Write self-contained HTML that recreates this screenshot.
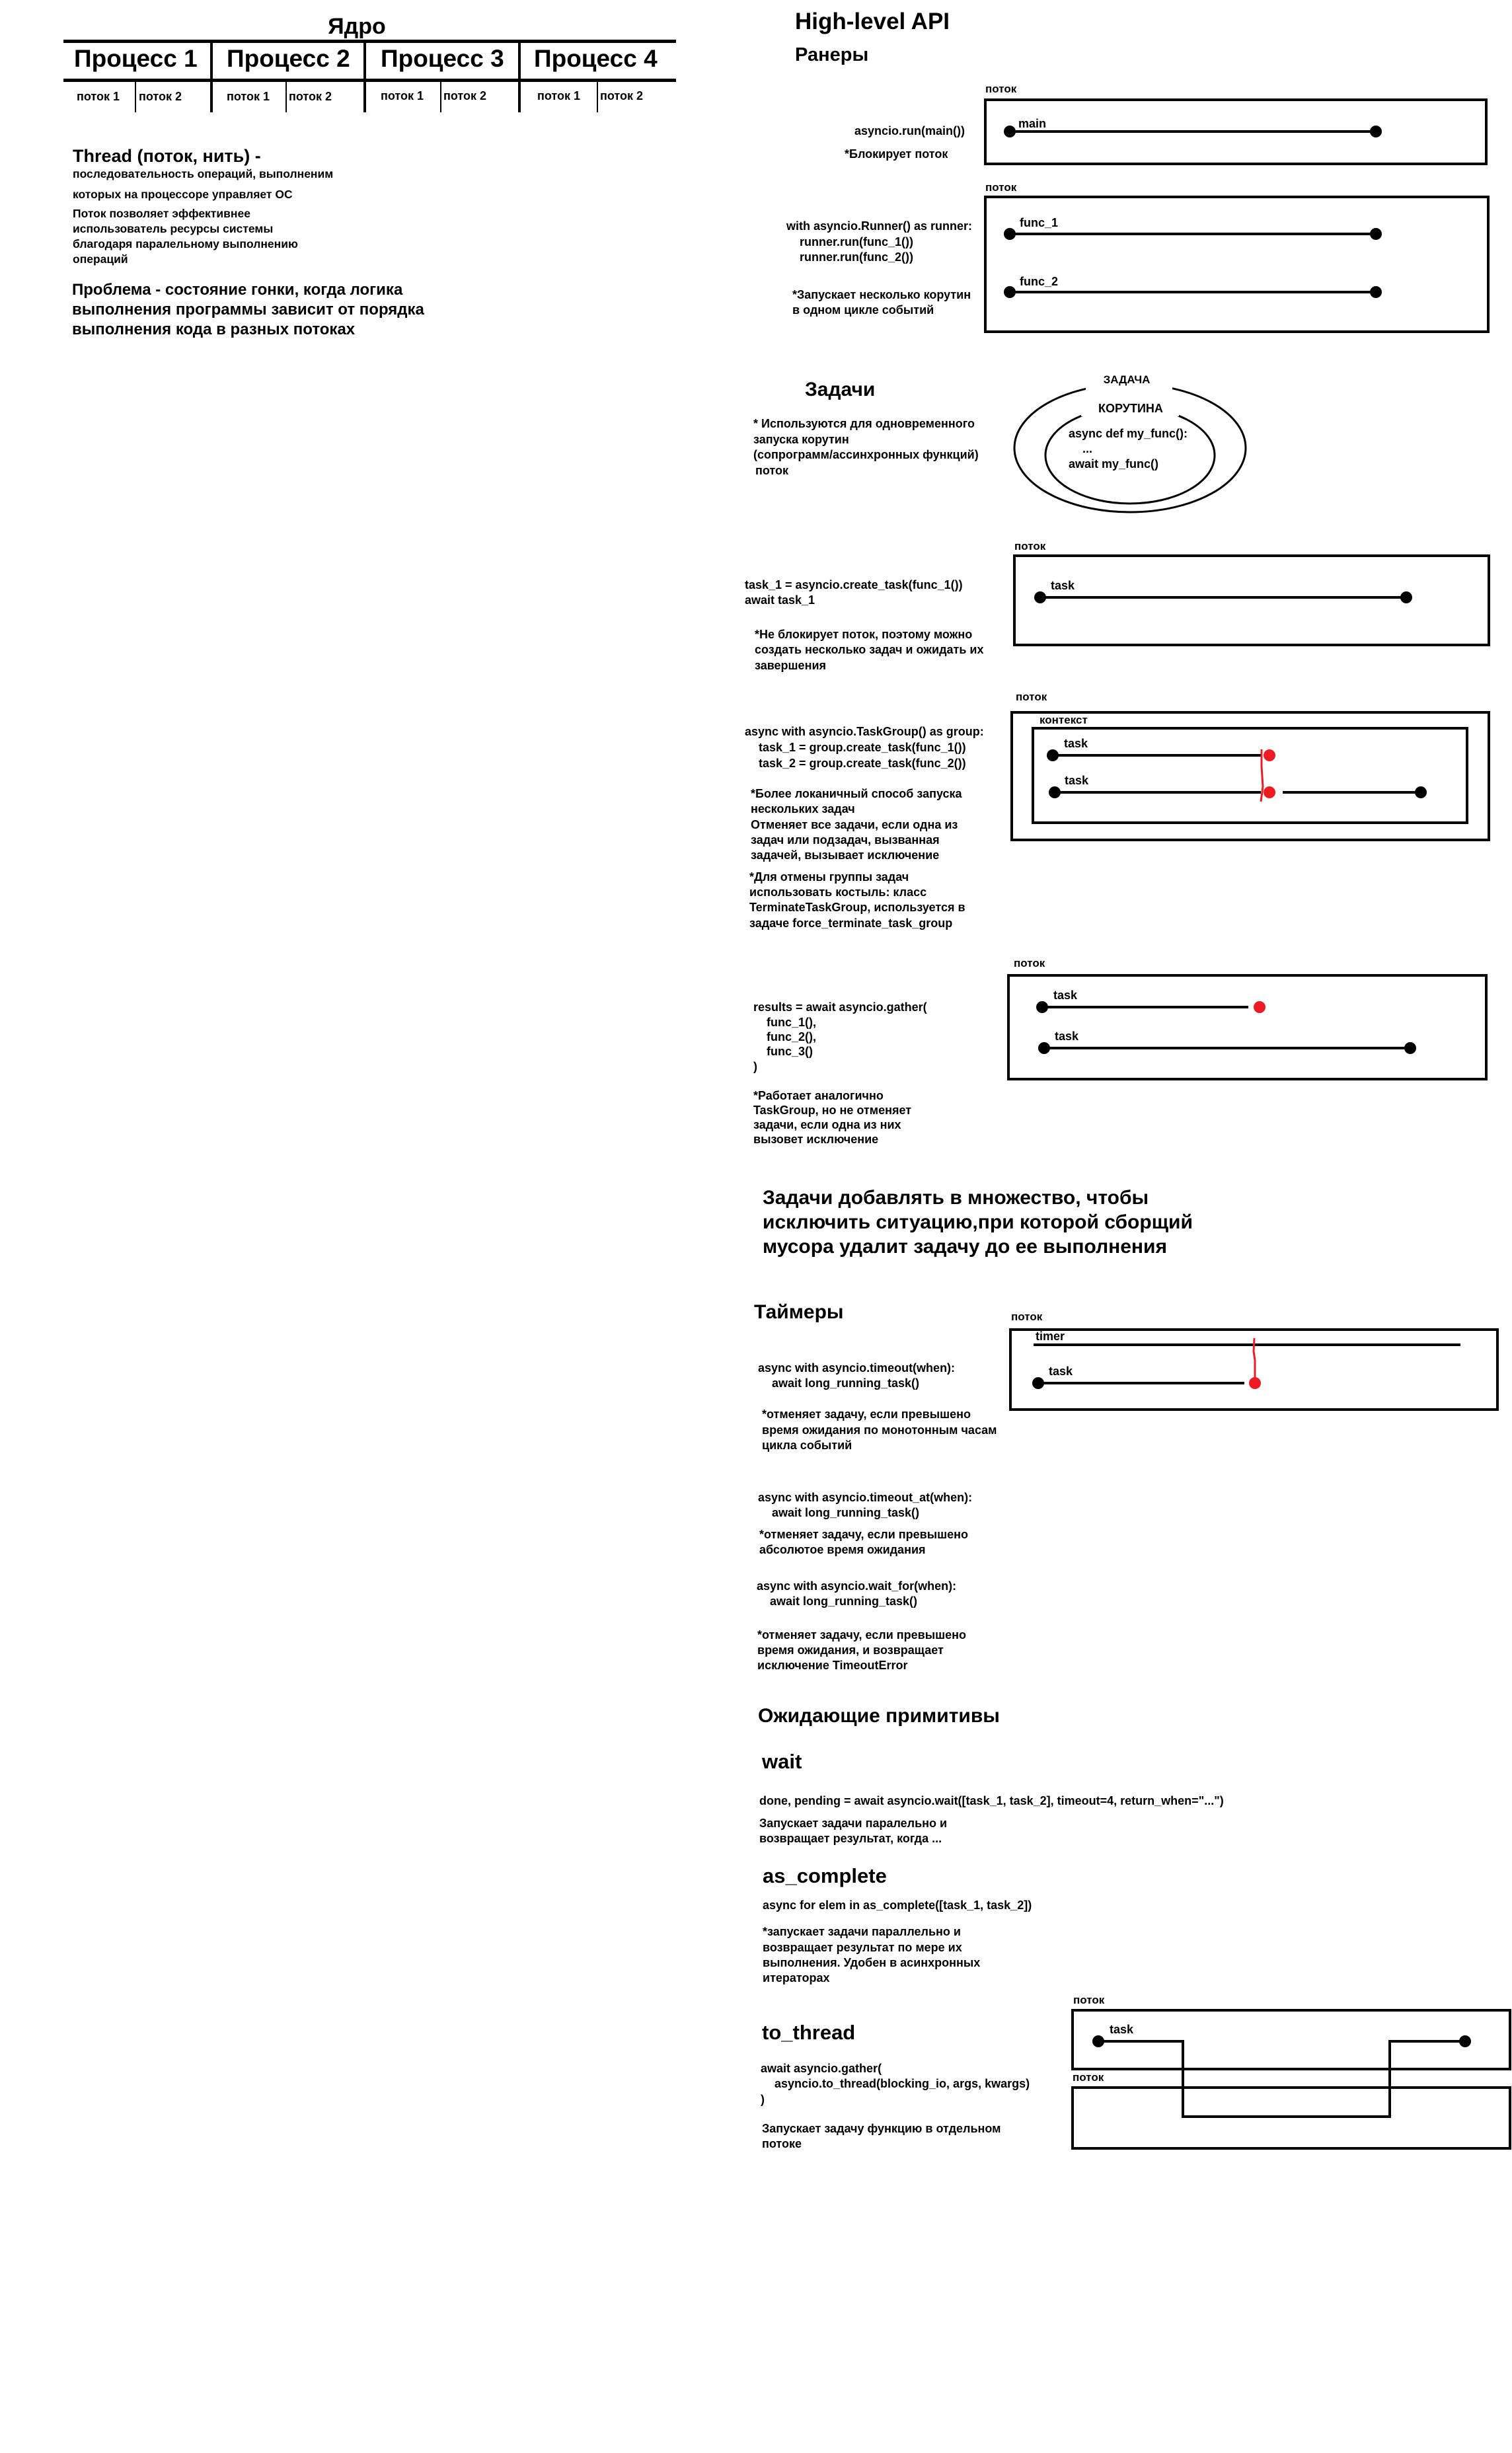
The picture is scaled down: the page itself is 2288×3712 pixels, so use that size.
<!DOCTYPE html>
<html><head><meta charset="utf-8"><style>
html,body{margin:0;padding:0;background:#fff;}
svg{display:block;}
text{font-family:"Liberation Sans","Noto Sans CJK SC",sans-serif;font-weight:bold;fill:#000;}
.s{font-size:18px;}
.l{font-size:17px;}
</style></head><body>
<svg width="2288" height="3712" viewBox="0 0 2288 3712" xmlns="http://www.w3.org/2000/svg">
<rect width="2288" height="3712" fill="#fff"/>
<!-- Kernel table -->
<text x="540" y="51" text-anchor="middle" style="font-size:34px">Ядро</text>
<rect x="96" y="60" width="927" height="5"/>
<rect x="96" y="119" width="927" height="5"/>
<rect x="318" y="60" width="4" height="110"/>
<rect x="550" y="60" width="4" height="110"/>
<rect x="784" y="60" width="4" height="110"/>
<rect x="204" y="122" width="2" height="48"/>
<rect x="432" y="122" width="2" height="48"/>
<rect x="666" y="122" width="2" height="48"/>
<rect x="903" y="122" width="2" height="48"/>
<g style="font-size:37px">
<text x="112" y="101">Процесс 1</text>
<text x="343" y="101">Процесс 2</text>
<text x="576" y="101">Процесс 3</text>
<text x="808" y="101">Процесс 4</text>
</g>
<g style="font-size:18px">
<text x="116" y="152">поток 1</text><text x="210" y="152">поток 2</text>
<text x="343" y="152">поток 1</text><text x="437" y="152">поток 2</text>
<text x="576" y="151">поток 1</text><text x="671" y="151">поток 2</text>
<text x="813" y="151">поток 1</text><text x="908" y="151">поток 2</text>
</g>
<text x="110" y="245" style="font-size:27px">Thread (поток, нить) -</text>
<g style="font-size:17.5px">
<text x="110" y="269">последовательность операций, выполненим</text>
<text x="110" y="300">которых на процессоре управляет ОС</text>
<text x="110" y="329">Поток позволяет эффективнее</text>
<text x="110" y="352">использователь ресурсы системы</text>
<text x="110" y="375">благодаря паралельному выполнению</text>
<text x="110" y="398">операций</text>
</g>
<g style="font-size:24px">
<text x="109" y="446">Проблема - состояние гонки, когда логика</text>
<text x="109" y="476">выполнения программы зависит от порядка</text>
<text x="109" y="506">выполнения кода в разных потоках</text>
</g>

<!-- High-level API -->
<text x="1203" y="44" style="font-size:35px">High-level API</text>
<text x="1203" y="92" style="font-size:29px">Ранеры</text>

<g class="s">
<text x="1491" y="140" class="l">поток</text>
<text x="1293" y="204">asyncio.run(main())</text>
<text x="1278" y="239">*Блокирует поток</text>
</g>
<rect x="1491" y="151" width="758" height="97" fill="none" stroke="#000" stroke-width="4"/>
<line x1="1528" y1="199" x2="2082" y2="199" stroke="#000" stroke-width="4"/>
<circle cx="1528" cy="199" r="9"/><circle cx="2082" cy="199" r="9"/>
<text x="1541" y="193" class="s">main</text>

<text x="1491" y="289" class="l">поток</text>
<rect x="1491" y="298" width="761" height="204" fill="none" stroke="#000" stroke-width="4"/>
<line x1="1528" y1="354" x2="2082" y2="354" stroke="#000" stroke-width="4"/>
<circle cx="1528" cy="354" r="9"/><circle cx="2082" cy="354" r="9"/>
<text x="1543" y="343" class="s">func_1</text>
<line x1="1528" y1="442" x2="2082" y2="442" stroke="#000" stroke-width="4"/>
<circle cx="1528" cy="442" r="9"/><circle cx="2082" cy="442" r="9"/>
<text x="1543" y="432" class="s">func_2</text>
<g class="s">
<text x="1190" y="348">with asyncio.Runner() as runner:</text>
<text x="1210" y="372">runner.run(func_1())</text>
<text x="1210" y="395">runner.run(func_2())</text>
<text x="1199" y="452">*Запускает несколько корутин</text>
<text x="1199" y="475">в одном цикле событий</text>
</g>

<!-- Задачи -->
<text x="1218" y="599" style="font-size:30px">Задачи</text>
<g class="s">
<text x="1140" y="647">* Используются для одновременного</text>
<text x="1140" y="671">запуска корутин</text>
<text x="1140" y="694">(сопрограмм/ассинхронных функций)</text>
<text x="1143" y="718">поток</text>
</g>
<ellipse cx="1710" cy="678" rx="175" ry="97" fill="none" stroke="#000" stroke-width="3"/>
<rect x="1643" y="560" width="131" height="30" fill="#fff"/>
<text x="1705" y="580" text-anchor="middle" style="font-size:17px">ЗАДАЧА</text>
<ellipse cx="1710" cy="689" rx="128" ry="73" fill="none" stroke="#000" stroke-width="3"/>
<rect x="1636" y="600" width="148" height="30" fill="#fff"/>
<text x="1711" y="624" text-anchor="middle" style="font-size:18px">КОРУТИНА</text>
<g class="s">
<text x="1617" y="662">async def my_func():</text>
<text x="1638" y="685">...</text>
<text x="1617" y="708">await my_func()</text>
</g>

<!-- create_task -->
<text x="1535" y="832" class="l">поток</text>
<rect x="1535" y="841" width="718" height="135" fill="none" stroke="#000" stroke-width="4"/>
<line x1="1574" y1="904" x2="2128" y2="904" stroke="#000" stroke-width="4"/>
<circle cx="1574" cy="904" r="9"/><circle cx="2128" cy="904" r="9"/>
<text x="1590" y="892" class="s">task</text>
<g class="s">
<text x="1127" y="891">task_1 = asyncio.create_task(func_1())</text>
<text x="1127" y="914">await task_1</text>
<text x="1142" y="966">*Не блокирует поток, поэтому можно</text>
<text x="1142" y="989">создать несколько задач и ожидать их</text>
<text x="1142" y="1013">завершения</text>
</g>

<!-- TaskGroup -->
<text x="1537" y="1060" class="l">поток</text>
<rect x="1531" y="1078" width="722" height="193" fill="none" stroke="#000" stroke-width="4"/>
<text x="1573" y="1095" class="l">контекст</text>
<rect x="1563" y="1102" width="657" height="143" fill="none" stroke="#000" stroke-width="4"/>
<line x1="1593" y1="1143" x2="1908" y2="1143" stroke="#000" stroke-width="4"/>
<circle cx="1593" cy="1143" r="9"/>
<circle cx="1921" cy="1143" r="9" fill="#ed1c24"/>
<text x="1610" y="1131" class="s">task</text>
<line x1="1596" y1="1199" x2="1908" y2="1199" stroke="#000" stroke-width="4"/>
<circle cx="1596" cy="1199" r="9"/>
<circle cx="1921" cy="1199" r="9" fill="#ed1c24"/>
<line x1="1941" y1="1199" x2="2150" y2="1199" stroke="#000" stroke-width="4"/>
<circle cx="2150" cy="1199" r="9"/>
<text x="1611" y="1187" class="s">task</text>
<path d="M1909 1134 L1909 1160 L1911 1190 L1908 1213" fill="none" stroke="#ed1c24" stroke-width="3"/>
<g class="s">
<text x="1127" y="1113">async with asyncio.TaskGroup() as group:</text>
<text x="1148" y="1137">task_1 = group.create_task(func_1())</text>
<text x="1148" y="1161">task_2 = group.create_task(func_2())</text>
<text x="1136" y="1207">*Более локаничный способ запуска</text>
<text x="1136" y="1230">нескольких задач</text>
<text x="1136" y="1254">Отменяет все задачи, если одна из</text>
<text x="1136" y="1277">задач или подзадач, вызванная</text>
<text x="1136" y="1300">задачей, вызывает исключение</text>
<text x="1134" y="1333">*Для отмены группы задач</text>
<text x="1134" y="1356">использовать костыль: класс</text>
<text x="1134" y="1379">TerminateTaskGroup, используется в</text>
<text x="1134" y="1403">задаче force_terminate_task_group</text>
</g>

<!-- gather -->
<text x="1534" y="1463" class="l">поток</text>
<rect x="1526" y="1476" width="723" height="157" fill="none" stroke="#000" stroke-width="4"/>
<line x1="1577" y1="1524" x2="1889" y2="1524" stroke="#000" stroke-width="4"/>
<circle cx="1577" cy="1524" r="9"/>
<circle cx="1906" cy="1524" r="9" fill="#ed1c24"/>
<text x="1594" y="1512" class="s">task</text>
<line x1="1580" y1="1586" x2="2134" y2="1586" stroke="#000" stroke-width="4"/>
<circle cx="1580" cy="1586" r="9"/><circle cx="2134" cy="1586" r="9"/>
<text x="1596" y="1574" class="s">task</text>
<g class="s">
<text x="1140" y="1530">results = await asyncio.gather(</text>
<text x="1160" y="1553">func_1(),</text>
<text x="1160" y="1575">func_2(),</text>
<text x="1160" y="1597">func_3()</text>
<text x="1140" y="1620">)</text>
<text x="1140" y="1664">*Работает аналогично</text>
<text x="1140" y="1686">TaskGroup, но не отменяет</text>
<text x="1140" y="1708">задачи, если одна из них</text>
<text x="1140" y="1730">вызовет исключение</text>
</g>
<g style="font-size:30px">
<text x="1154" y="1822">Задачи добавлять в множество, чтобы</text>
<text x="1154" y="1859">исключить ситуацию,при которой сборщий</text>
<text x="1154" y="1896">мусора удалит задачу до ее выполнения</text>
</g>

<!-- Timers -->
<text x="1141" y="1995" style="font-size:30px">Таймеры</text>
<text x="1530" y="1998" class="l">поток</text>
<rect x="1529" y="2012" width="737" height="121" fill="none" stroke="#000" stroke-width="4"/>
<line x1="1564" y1="2035" x2="2210" y2="2035" stroke="#000" stroke-width="4"/>
<text x="1567" y="2028" class="s">timer</text>
<line x1="1570" y1="2093" x2="1883" y2="2093" stroke="#000" stroke-width="4"/>
<circle cx="1571" cy="2093" r="9"/>
<circle cx="1899" cy="2093" r="9" fill="#ed1c24"/>
<path d="M1898 2025 L1897 2045 L1899 2058 L1899 2093" fill="none" stroke="#ed1c24" stroke-width="3"/>
<text x="1587" y="2081" class="s">task</text>
<g class="s">
<text x="1147" y="2076">async with asyncio.timeout(when):</text>
<text x="1168" y="2099">await long_running_task()</text>
<text x="1153" y="2146">*отменяет задачу, если превышено</text>
<text x="1153" y="2170">время ожидания по монотонным часам</text>
<text x="1153" y="2193">цикла событий</text>
<text x="1147" y="2272">async with asyncio.timeout_at(when):</text>
<text x="1168" y="2295">await long_running_task()</text>
<text x="1149" y="2328">*отменяет задачу, если превышено</text>
<text x="1149" y="2351">абсолютое время ожидания</text>
<text x="1145" y="2406">async with asyncio.wait_for(when):</text>
<text x="1165" y="2429">await long_running_task()</text>
<text x="1146" y="2480">*отменяет задачу, если превышено</text>
<text x="1146" y="2503">время ожидания, и возвращает</text>
<text x="1146" y="2526">исключение TimeoutError</text>
</g>

<!-- Waiting primitives -->
<text x="1147" y="2606" style="font-size:30px">Ожидающие примитивы</text>
<text x="1153" y="2676" style="font-size:31px">wait</text>
<g class="s">
<text x="1149" y="2731">done, pending = await asyncio.wait([task_1, task_2], timeout=4, return_when="...")</text>
<text x="1149" y="2765">Запускает задачи паралельно и</text>
<text x="1149" y="2788">возвращает результат, когда ...</text>
</g>
<text x="1154" y="2849" style="font-size:31px">as_complete</text>
<g class="s">
<text x="1154" y="2889">async for elem in as_complete([task_1, task_2])</text>
<text x="1154" y="2929">*запускает задачи параллельно и</text>
<text x="1154" y="2953">возвращает результат по мере их</text>
<text x="1154" y="2976">выполнения. Удобен в асинхронных</text>
<text x="1154" y="2999">итераторах</text>
</g>
<text x="1153" y="3086" style="font-size:31px">to_thread</text>
<g class="s">
<text x="1151" y="3136">await asyncio.gather(</text>
<text x="1172" y="3159">asyncio.to_thread(blocking_io, args, kwargs)</text>
<text x="1151" y="3183">)</text>
<text x="1153" y="3227">Запускает задачу функцию в отдельном</text>
<text x="1153" y="3250">потоке</text>
</g>
<text x="1624" y="3032" class="l">поток</text>
<rect x="1623" y="3042" width="662" height="89" fill="none" stroke="#000" stroke-width="4"/>
<text x="1623" y="3149" class="l">поток</text>
<rect x="1623" y="3159" width="662" height="92" fill="none" stroke="#000" stroke-width="4"/>
<path d="M1662 3089 L1790 3089 L1790 3203 L2103 3203 L2103 3089 L2217 3089" fill="none" stroke="#000" stroke-width="4"/>
<circle cx="1662" cy="3089" r="9"/><circle cx="2217" cy="3089" r="9"/>
<text x="1679" y="3077" class="s">task</text>
</svg>
</body></html>
